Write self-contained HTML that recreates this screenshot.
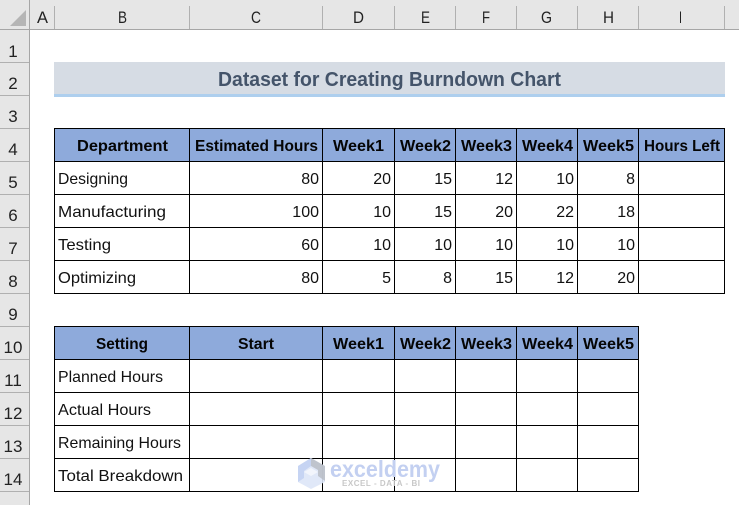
<!DOCTYPE html>
<html><head><meta charset="utf-8"><style>
html,body{margin:0;padding:0;background:#fff;width:739px;height:505px;overflow:hidden}
svg{display:block;position:absolute;left:0;top:0}
text{font-family:"Liberation Sans",sans-serif;fill:#000;font-size:16px}
.h{font-weight:bold;font-size:15.5px;fill:#050505}
.d{fill:#111}
.n{text-anchor:end;fill:#111}
.r,.c{fill:#222;font-size:17px}
.r{text-anchor:middle}
</style></head><body>
<svg width="739" height="505" viewBox="0 0 739 505" shape-rendering="crispEdges">
<rect width="739" height="30" fill="#e6e6e6"/>
<rect y="0" width="29" height="505" fill="#e6e6e6"/>
<polygon points="10,26 26,10 26,26" fill="#b5b5b5" shape-rendering="auto"/>
<rect x="0" y="29" width="739" height="1" fill="#a6a6a6"/>
<rect x="29" y="0" width="1" height="505" fill="#a6a6a6"/>
<g fill="#b0b0b0">
<rect x="54" y="6" width="1" height="23"/><rect x="189" y="6" width="1" height="23"/><rect x="322" y="6" width="1" height="23"/><rect x="394" y="6" width="1" height="23"/><rect x="455" y="6" width="1" height="23"/><rect x="516" y="6" width="1" height="23"/><rect x="577" y="6" width="1" height="23"/><rect x="638" y="6" width="1" height="23"/><rect x="724" y="6" width="1" height="23"/>
<rect x="0" y="62" width="29" height="1"/><rect x="0" y="95" width="29" height="1"/><rect x="0" y="128" width="29" height="1"/><rect x="0" y="161" width="29" height="1"/><rect x="0" y="194" width="29" height="1"/><rect x="0" y="227" width="29" height="1"/><rect x="0" y="260" width="29" height="1"/><rect x="0" y="293" width="29" height="1"/><rect x="0" y="326" width="29" height="1"/><rect x="0" y="359" width="29" height="1"/><rect x="0" y="392" width="29" height="1"/><rect x="0" y="425" width="29" height="1"/><rect x="0" y="458" width="29" height="1"/><rect x="0" y="491" width="29" height="1"/>
</g>
<rect x="54" y="62" width="671" height="32" fill="#d6dce4"/>
<rect x="54" y="94" width="671" height="3" fill="#aecfee"/>
<rect x="54" y="128" width="671" height="33" fill="#8eaadb"/>
<rect x="54" y="326" width="585" height="33" fill="#8eaadb"/>
<g fill="#000">
<rect x="54" y="128" width="671" height="1"/><rect x="54" y="161" width="671" height="1"/><rect x="54" y="194" width="671" height="1"/><rect x="54" y="227" width="671" height="1"/><rect x="54" y="260" width="671" height="1"/><rect x="54" y="293" width="671" height="1"/>
<rect x="54" y="128" width="1" height="166"/><rect x="189" y="128" width="1" height="166"/><rect x="322" y="128" width="1" height="166"/><rect x="394" y="128" width="1" height="166"/><rect x="455" y="128" width="1" height="166"/><rect x="516" y="128" width="1" height="166"/><rect x="577" y="128" width="1" height="166"/><rect x="638" y="128" width="1" height="166"/><rect x="724" y="128" width="1" height="166"/>
<rect x="54" y="326" width="585" height="1"/><rect x="54" y="359" width="585" height="1"/><rect x="54" y="392" width="585" height="1"/><rect x="54" y="425" width="585" height="1"/><rect x="54" y="458" width="585" height="1"/><rect x="54" y="491" width="585" height="1"/>
<rect x="54" y="326" width="1" height="166"/><rect x="189" y="326" width="1" height="166"/><rect x="322" y="326" width="1" height="166"/><rect x="394" y="326" width="1" height="166"/><rect x="455" y="326" width="1" height="166"/><rect x="516" y="326" width="1" height="166"/><rect x="577" y="326" width="1" height="166"/><rect x="638" y="326" width="1" height="166"/>
</g>
<g shape-rendering="auto">
<polygon points="311,458 325,466 325,482 311,489 298,482 298,466" fill="#dde5f7" opacity=".9"/>
<polygon points="298,466 311,458 311,466 304,471 304,478 298,482" fill="#c6d4f3"/>
<polygon points="311,458 325,466 325,481 318,476 318,470 311,466" fill="#b9bdc6" opacity=".85"/>
<polygon points="304,472 311,468 318,472 311,476" fill="#f2f5fc"/>
</g>
<text x="330" y="477" textLength="110" lengthAdjust="spacingAndGlyphs" style="font-size:23px;font-weight:bold;fill:#c3d0f1">exceldemy</text>
<text x="342" y="486" textLength="78" lengthAdjust="spacing" style="font-size:8px;font-weight:bold;fill:#c8c8c8">EXCEL - DATA - BI</text>

<g>
<text class="c" x="37" y="23" textLength="11" lengthAdjust="spacingAndGlyphs">A</text>
<text class="c" x="118" y="23" textLength="9" lengthAdjust="spacingAndGlyphs">B</text>
<text class="c" x="251" y="23" textLength="10" lengthAdjust="spacingAndGlyphs">C</text>
<text class="c" x="353" y="23" textLength="11" lengthAdjust="spacingAndGlyphs">D</text>
<text class="c" x="421" y="23" textLength="9" lengthAdjust="spacingAndGlyphs">E</text>
<text class="c" x="482" y="23" textLength="8" lengthAdjust="spacingAndGlyphs">F</text>
<text class="c" x="541" y="23" textLength="11" lengthAdjust="spacingAndGlyphs">G</text>
<text class="c" x="603" y="23" textLength="11" lengthAdjust="spacingAndGlyphs">H</text>
<text class="c" x="679" y="23" textLength="3" lengthAdjust="spacingAndGlyphs">I</text>
</g>
<g>
<text class="r" x="13" y="57">1</text><text class="r" x="13" y="89">2</text><text class="r" x="13" y="122">3</text><text class="r" x="13" y="155">4</text><text class="r" x="13" y="188">5</text><text class="r" x="13" y="221">6</text><text class="r" x="13" y="254">7</text><text class="r" x="13" y="287">8</text><text class="r" x="13" y="320">9</text><text class="r" x="13" y="353">10</text><text class="r" x="13" y="386">11</text><text class="r" x="13" y="419">12</text><text class="r" x="13" y="452">13</text><text class="r" x="13" y="485">14</text>
</g>
<text x="218" y="86" textLength="343" lengthAdjust="spacingAndGlyphs" style="font-size:20px;font-weight:bold;fill:#44546a">Dataset for Creating Burndown Chart</text>

<g>
<text class="h" x="77" y="151" textLength="91" lengthAdjust="spacingAndGlyphs">Department</text>
<text class="h" x="195" y="151" textLength="123" lengthAdjust="spacingAndGlyphs">Estimated Hours</text>
<text class="h" x="333" y="151" textLength="51" lengthAdjust="spacingAndGlyphs">Week1</text>
<text class="h" x="400" y="151" textLength="51" lengthAdjust="spacingAndGlyphs">Week2</text>
<text class="h" x="461" y="151" textLength="51" lengthAdjust="spacingAndGlyphs">Week3</text>
<text class="h" x="522" y="151" textLength="51" lengthAdjust="spacingAndGlyphs">Week4</text>
<text class="h" x="583" y="151" textLength="51" lengthAdjust="spacingAndGlyphs">Week5</text>
<text class="h" x="644" y="151" textLength="76" lengthAdjust="spacingAndGlyphs">Hours Left</text>

<text class="h" x="96" y="349" textLength="52" lengthAdjust="spacingAndGlyphs">Setting</text>
<text class="h" x="238" y="349" textLength="36" lengthAdjust="spacingAndGlyphs">Start</text>
<text class="h" x="333" y="349" textLength="51" lengthAdjust="spacingAndGlyphs">Week1</text>
<text class="h" x="400" y="349" textLength="51" lengthAdjust="spacingAndGlyphs">Week2</text>
<text class="h" x="461" y="349" textLength="51" lengthAdjust="spacingAndGlyphs">Week3</text>
<text class="h" x="522" y="349" textLength="51" lengthAdjust="spacingAndGlyphs">Week4</text>
<text class="h" x="583" y="349" textLength="51" lengthAdjust="spacingAndGlyphs">Week5</text>
</g>
<g>
<text class="d" x="58" y="184" textLength="70" lengthAdjust="spacingAndGlyphs">Designing</text>
<text class="d" x="58" y="217" textLength="108" lengthAdjust="spacingAndGlyphs">Manufacturing</text>
<text class="d" x="58" y="250" textLength="53" lengthAdjust="spacingAndGlyphs">Testing</text>
<text class="d" x="58" y="283" textLength="78" lengthAdjust="spacingAndGlyphs">Optimizing</text>
<text class="d" x="58" y="382" textLength="105" lengthAdjust="spacingAndGlyphs">Planned Hours</text>
<text class="d" x="58" y="415" textLength="93" lengthAdjust="spacingAndGlyphs">Actual Hours</text>
<text class="d" x="58" y="448" textLength="123" lengthAdjust="spacingAndGlyphs">Remaining Hours</text>
<text class="d" x="58" y="481" textLength="125" lengthAdjust="spacingAndGlyphs">Total Breakdown</text>
</g>
<g>
<text class="n" x="319" y="184">80</text><text class="n" x="391" y="184">20</text><text class="n" x="452" y="184">15</text><text class="n" x="513" y="184">12</text><text class="n" x="574" y="184">10</text><text class="n" x="635" y="184">8</text>
<text class="n" x="319" y="217">100</text><text class="n" x="391" y="217">10</text><text class="n" x="452" y="217">15</text><text class="n" x="513" y="217">20</text><text class="n" x="574" y="217">22</text><text class="n" x="635" y="217">18</text>
<text class="n" x="319" y="250">60</text><text class="n" x="391" y="250">10</text><text class="n" x="452" y="250">10</text><text class="n" x="513" y="250">10</text><text class="n" x="574" y="250">10</text><text class="n" x="635" y="250">10</text>
<text class="n" x="319" y="283">80</text><text class="n" x="391" y="283">5</text><text class="n" x="452" y="283">8</text><text class="n" x="513" y="283">15</text><text class="n" x="574" y="283">12</text><text class="n" x="635" y="283">20</text>
</g>
</svg>
</body></html>
